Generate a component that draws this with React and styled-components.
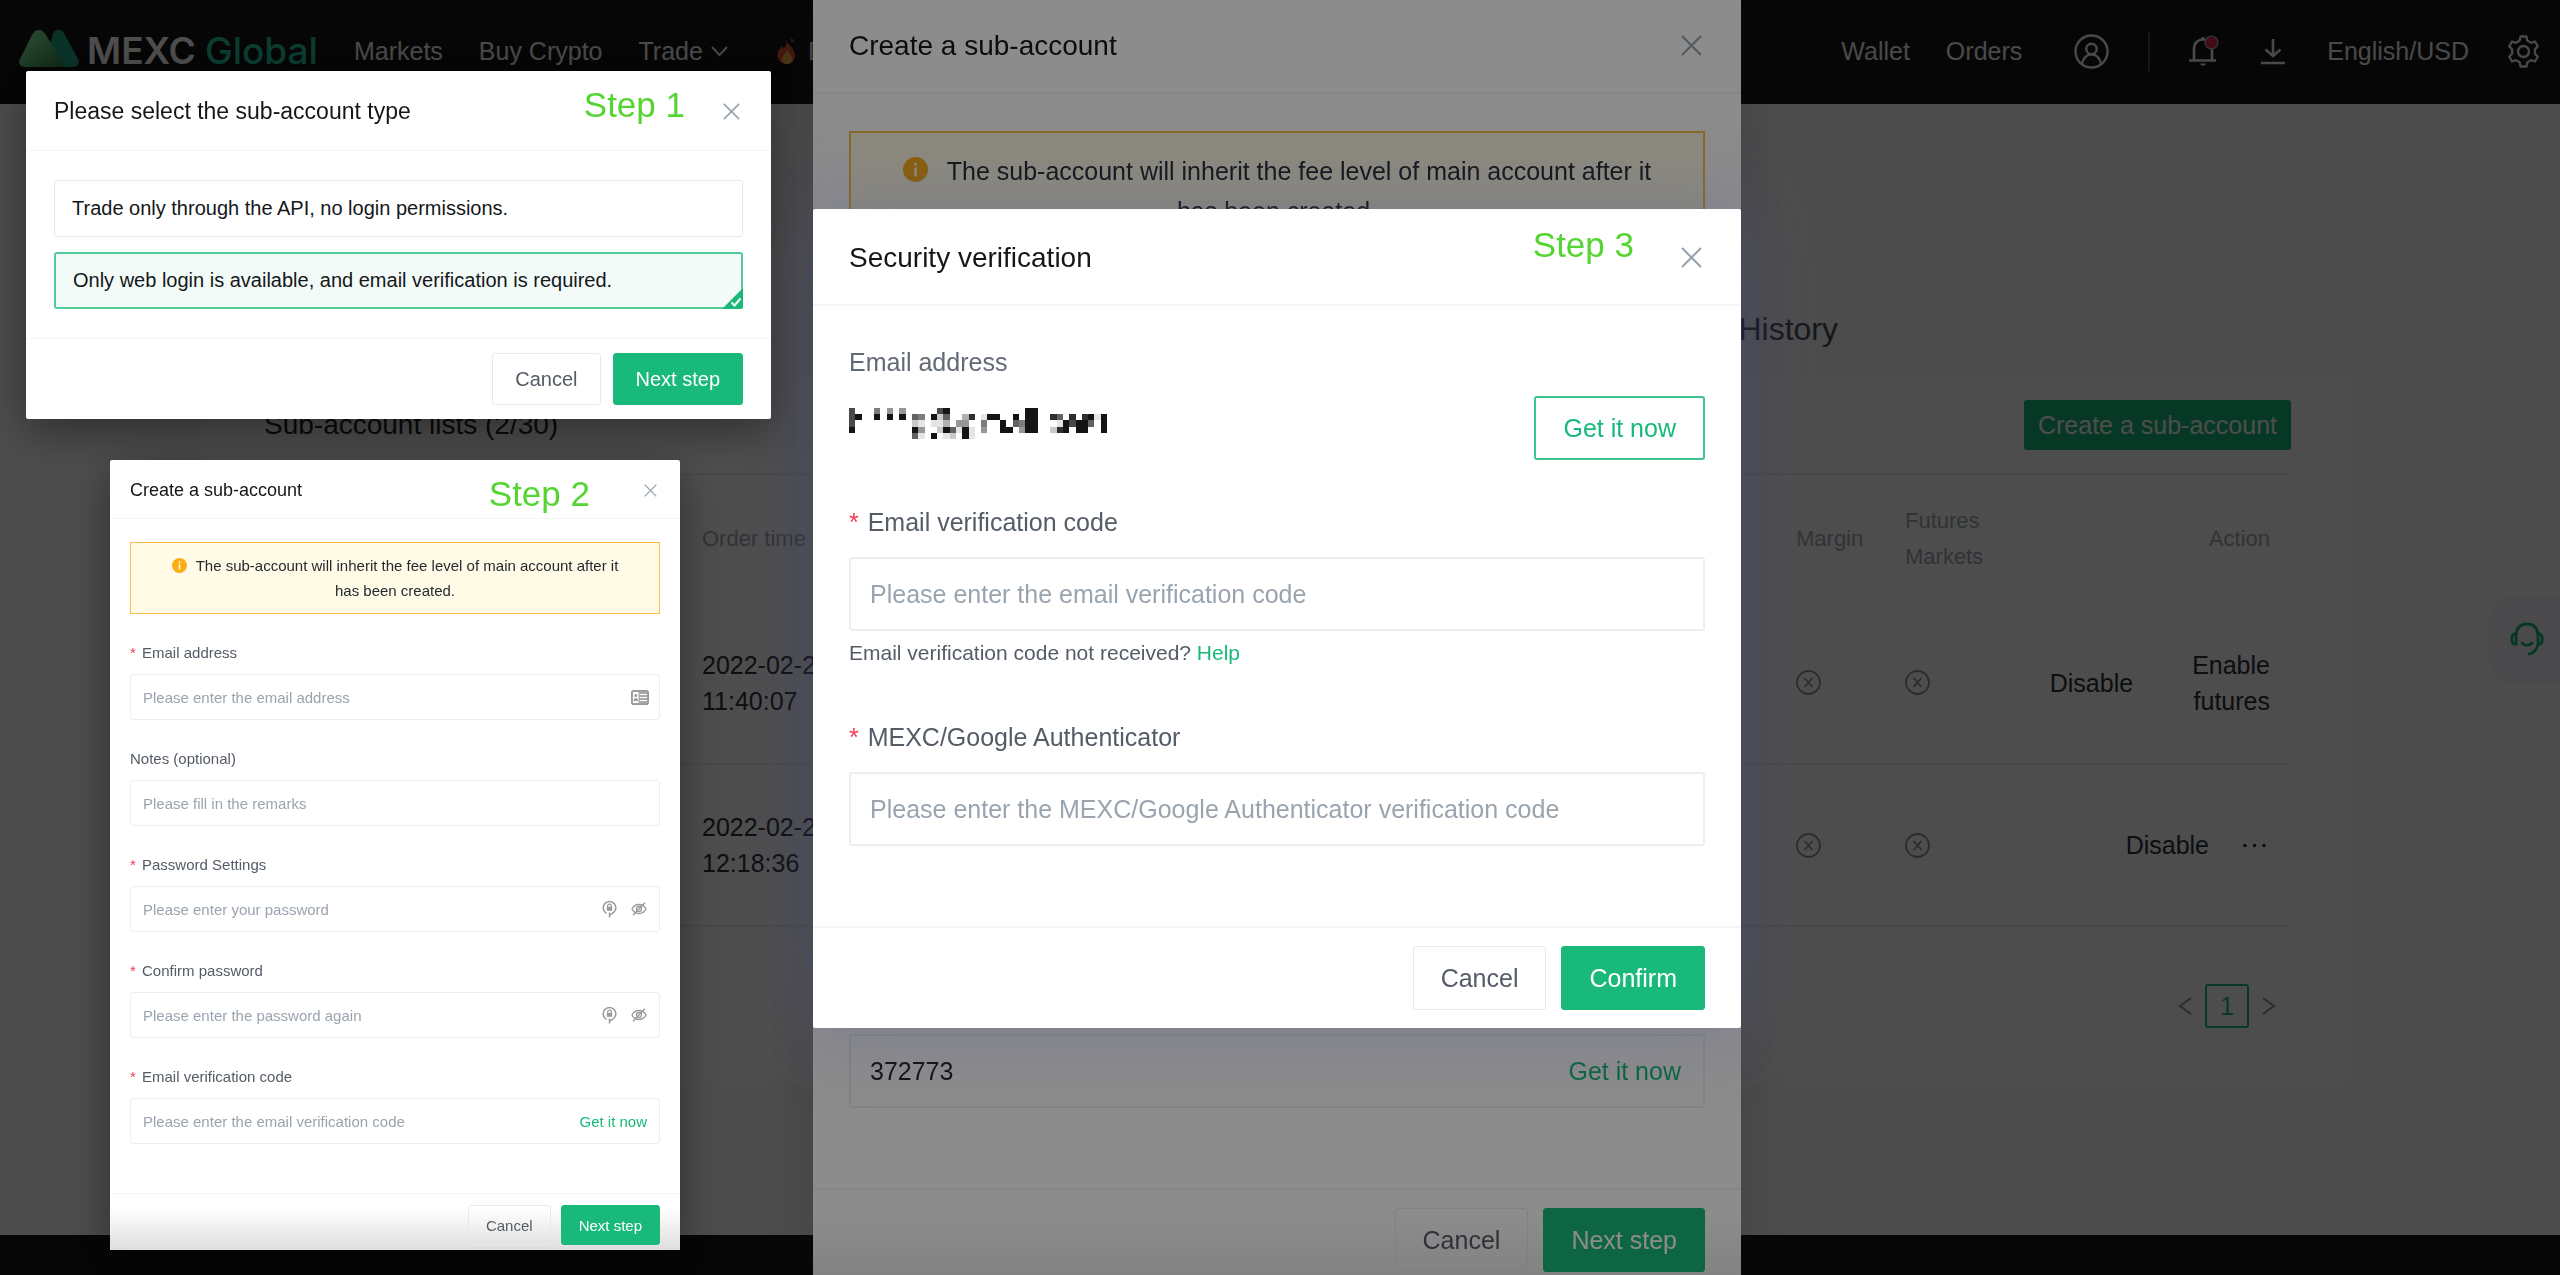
import React, {useId, useState} from 'react';
import styled, {createGlobalStyle, ThemeProvider} from 'styled-components';

const GlobalStyle = createGlobalStyle`
    *, *::before, *::after{
      box-sizing: border-box;
    }

    body{
      margin: 0;
      background: #FAFAFA;
      font-family: "Liberation Sans", Arial, Helvetica, sans-serif;
      color: #1E2329;
      overflow: hidden;
    }

    h1, h2, h3, p{
      margin: 0;
      font-weight: 400;
    }

    button, input{
      font-family: inherit;
    }

    svg{
      display: block;
      flex-shrink: 0;
    }
`

/* The dialogs share one set of parts, drawn at three scales */
const small = {
    pad: 20, title: 18, text: 15, header: 59, line: 25, labelGap: 9, input: 46, inputPad: 12,
    button: 40, buttonPad: 17, gap: 10, footTop: 11, footBottom: 5, close: 13, border: 1, info: 15, alertPad: 10
}

const medium = {
    pad: 28, title: 23, text: 20, header: 80, line: 28, labelGap: 12, input: 58, inputPad: 18,
    button: 52, buttonPad: 22, gap: 12, footTop: 14, footBottom: 14, close: 17, border: 1, info: 20, alertPad: 14
}

const large = {
    pad: 36, title: 28, text: 25, header: 97, line: 40, labelGap: 15, input: 74, inputPad: 19,
    button: 64, buttonPad: 27, gap: 15, footTop: 18, footBottom: 18, close: 21, border: 2, info: 25, alertPad: 18
}

const Page = styled.div`
    display: flex;
    flex-direction: column;
    min-height: 100vh;
`

const TopBar = styled.header`
    display: flex;
    align-items: center;
    height: 104px;
    padding: 0 21px 2px 19px;
    background: #141414;
    color: #FFFFFF;
    font-size: 25px;
`

const Brand = styled.a`
    display: flex;
    align-items: center;
    gap: 8px;
    color: #FFFFFF;
    font-family: Inter, sans-serif;
    font-size: 37px;
    font-weight: 600;
    line-height: 40px;
    text-decoration: none;

    svg{
      margin-bottom: 6px;
    }
`

const BrandAccent = styled.span`
    color: #24C8A0;
    font-weight: 500;
`

const NavLinks = styled.nav`
    display: flex;
    align-items: center;
    gap: 36px;
    margin-left: 36px;
`

const AccountLinks = styled(NavLinks)`
    margin: 0 13px 0 0;
`

const NavLink = styled.a`
    display: flex;
    align-items: center;
    gap: 8px;
    color: #F0F0F0;
    text-decoration: none;
`

const HotLink = styled(NavLink)`
    gap: 10px;
    margin-left: 12px;
`

const Tools = styled.div`
    display: flex;
    align-items: center;
    gap: 39px;
    margin-left: auto;
    color: #F0F0F0;
`

const ToolDivider = styled.span`
    width: 2px;
    height: 40px;
    background: #4A4A4A;
`

const IconButton = styled.button`
    display: flex;
    padding: 0;
    border: none;
    background: none;
    color: inherit;
    cursor: pointer;
`

const Main = styled.main`
    flex: 1;
    padding: 0 211px 0 206px;
`

const Tabs = styled.div`
    display: flex;
    justify-content: flex-end;
    height: 273px;
    padding: 204px 511px 0 0;
    font-size: 32px;
    line-height: 42px;
`

const Tab = styled.a`
    color: #474D57;
    text-decoration: none;
`

const Card = styled.section`
    padding: 0 58px 56px;
    background: #FFFFFF;
`

const CardHeader = styled.div`
    display: flex;
    align-items: center;
    justify-content: space-between;
    height: 98px;
    border-bottom: 2px solid #EDEFF2;
`

const CardTitle = styled.h2`
    font-size: 28px;
`

const CreateButton = styled.button`
    height: 50px;
    padding: 0 14px;
    border: none;
    border-radius: 3px;
    background: #18B97A;
    color: #FFFFFF;
    font-size: 25px;
    cursor: pointer;
`

const Table = styled.table`
    width: 100%;
    border-collapse: collapse;
    table-layout: fixed;
    font-size: 25px;
    line-height: 36px;

    th{
      height: 127px;
      padding: 0 0 0 21px;
      color: #A0A8B0;
      font-size: 22px;
      font-weight: 400;
      text-align: left;
    }

    td{
      height: 162px;
      padding: 0 0 0 21px;
      border-bottom: 2px solid #EDEFF2;
      color: #2B2F36;
    }

    th:last-child, td:last-child{
      padding-right: 21px;
      text-align: right;
    }
`

const Col = styled.col`
    width: ${props => props.$width};
`

const Actions = styled.div`
    display: flex;
    align-items: center;
    justify-content: flex-end;
    gap: ${props => props.$compact ? '34px' : '59px'};
`

const ActionButton = styled.button`
    padding: 0;
    border: none;
    background: none;
    color: #2B2F36;
    font-size: 25px;
    line-height: 36px;
    text-align: right;
    cursor: pointer;
`

const Pagination = styled.nav`
    display: flex;
    align-items: center;
    justify-content: flex-end;
    gap: 11px;
    margin-top: 57px;
    padding-right: 14px;
    color: #8A929C;
`

const PageNumber = styled.button`
    width: 44px;
    height: 44px;
    padding: 0;
    border: 2px solid #18B97A;
    border-radius: 3px;
    background: none;
    color: #18B97A;
    font-size: 25px;
    cursor: pointer;
`

const BottomBar = styled.footer`
    height: 40px;
    background: #141414;
`

const Support = styled.button`
    position: fixed;
    right: 0;
    top: 595px;
    display: flex;
    align-items: center;
    justify-content: center;
    width: 70px;
    height: 90px;
    padding: 0 0 2px 4px;
    border: none;
    border-radius: 20px 0 0 20px;
    background: #F7F7FC;
    color: #18B97A;
    cursor: pointer;
`

const Overlay = styled.div`
    position: fixed;
    inset: 0;
    display: flex;
    align-items: ${props => props.$stretch ? 'stretch' : 'flex-start'};
    justify-content: center;
    padding: ${props => props.$stretch ? '0 6px 0 0' : '209px 6px 0 0'};
    background: rgba(0, 0, 0, 0.45);
    overflow: hidden;
`

const Dialog = styled.section`
    display: flex;
    flex-direction: column;
    width: 928px;
    max-width: 100%;
    border-radius: 2px;
    background: #FFFFFF;
`

const PageDialog = styled(Dialog)`
    margin: -3px 0 -15px;
    box-shadow: 0 0 60px rgba(60, 65, 110, 0.2);
`

const FrontDialog = styled(Dialog)`
    position: relative;
    box-shadow: 0 0 80px rgba(85, 92, 150, 0.36);
`

const FloatingDialog = styled(Dialog)`
    position: fixed;
    top: ${props => props.$top}px;
    left: ${props => props.$left}px;
    width: ${props => props.$width}px;
    box-shadow: 0 12px 44px rgba(0, 0, 0, 0.4);
`

const DialogHeader = styled.div`
    display: flex;
    align-items: center;
    justify-content: space-between;
    height: ${props => props.theme.header}px;
    padding: 2px ${props => props.theme.pad + 3}px 0 ${props => props.theme.pad}px;
    border-bottom: ${props => props.theme.border}px solid #F4F5F7;
`

const DialogTitle = styled.h2`
    color: #14171A;
    font-size: ${props => props.theme.title}px;
`

const CloseButton = styled(IconButton)`
    color: #98A3AE;
`

const StepLabel = styled.span`
    position: absolute;
    top: ${props => props.$top}px;
    right: ${props => props.$right}px;
    color: #54D532;
    font-size: 35px;
    line-height: 40px;
`

const DialogBody = styled.div`
    display: flex;
    flex-direction: column;
    flex: 1;
    justify-content: space-between;
    gap: ${props => props.$gap}px;
    padding: ${props => props.$padTop}px ${props => props.theme.pad}px ${props => props.$padBottom}px;
`

const DialogFooter = styled.div`
    display: flex;
    justify-content: flex-end;
    gap: ${props => props.theme.gap}px;
    padding: ${props => props.theme.footTop}px ${props => props.theme.pad}px ${props => props.theme.footBottom}px;
    border-top: ${props => props.theme.border}px solid #F4F5F7;
    background: ${props => props.$fade ? `linear-gradient(#FFFFFF 25%, ${props.$fade})` : 'none'};
`

const Button = styled.button`
    height: ${props => props.theme.button}px;
    padding: 0 ${props => props.theme.buttonPad}px;
    border: 1px solid ${props => props.$primary ? '#18B97A' : '#E6EAEF'};
    border-radius: 3px;
    background: ${props => props.$primary ? '#18B97A' : 'transparent'};
    color: ${props => props.$primary ? '#FFFFFF' : '#545C66'};
    font-size: ${props => props.theme.text}px;
    cursor: pointer;
`

const OutlineButton = styled(Button)`
    border: 2px solid #3CC48F;
    color: #18B97A;
`

const Options = styled.div`
    display: flex;
    flex-direction: column;
    gap: 15px;
`

const Option = styled.label`
    position: relative;
    display: flex;
    align-items: center;
    height: 57px;
    padding: 0 17px;
    border: ${props => props.$active ? '2px solid #52CB99' : '1px solid #E3E8ED'};
    border-radius: 3px;
    background: ${props => props.$active ? '#F3FBF8' : '#FFFFFF'};
    color: #14171A;
    font-size: 20px;
    cursor: pointer;

    svg{
      position: absolute;
      right: -2px;
      bottom: -2px;
    }
`

const OptionInput = styled.input`
    position: absolute;
    opacity: 0;
`

const Alert = styled.p`
    padding: ${props => props.theme.alertPad}px;
    border: ${props => props.theme.border}px solid #FABD4C;
    background: #FFFBE6;
    color: #262A30;
    font-size: ${props => props.theme.text}px;
    line-height: ${props => props.theme.line}px;
    text-align: center;

    svg{
      display: inline-block;
      margin-right: ${props => props.theme.info - 6}px;
      vertical-align: -2px;
    }
`

const FieldBlock = styled.div`
    display: flex;
    flex-direction: column;
`

const Label = styled.label`
    margin-bottom: ${props => props.theme.labelGap}px;
    color: #545C66;
    font-size: ${props => props.theme.text}px;
    line-height: ${props => props.theme.line}px;
`

const Required = styled.span`
    margin-right: 2px;
    color: #EF3E56;
`

const InputBox = styled.div`
    display: flex;
    align-items: center;
    gap: 14px;
    height: ${props => props.theme.input}px;
    padding: 0 ${props => props.theme.inputPad}px;
    padding-right: ${props => props.$padRight || props.theme.inputPad}px;
    border: ${props => props.theme.border}px solid #EBEEF3;
    border-radius: 3px;
    color: #999999;
`

const Input = styled.input`
    flex: 1;
    min-width: 0;
    height: 100%;
    padding: 0;
    border: none;
    background: none;
    color: #1E2329;
    font-size: ${props => props.theme.text}px;

    &:focus{
      outline: none;
    }

    &::placeholder{
      color: #9AA4AE;
      opacity: 1;
    }
`

const TextButton = styled.button`
    padding: 0;
    border: none;
    background: none;
    color: #18B97A;
    font-size: ${props => props.theme.text}px;
    cursor: pointer;
`

const Hint = styled.p`
    margin: 7px 0;
    color: #545C66;
    font-size: 21px;
    line-height: 30px;
`

const HelpLink = styled.a`
    color: #18B97A;
    text-decoration: none;
`

const EmailCaption = styled.p`
    color: #626A75;
    font-size: 25px;
    line-height: 40px;
`

const EmailRow = styled.div`
    display: flex;
    align-items: center;
    justify-content: space-between;
    margin-top: 14px;

    svg{
      margin-bottom: 10px;
    }
`

/* Blocks of the masked address, row by row: [column, darkness from 1 to 9] */
const emailRows = [
    [[0, 7], [4, 5], [6, 4], [8, 4], [14, 7], [15, 9], [28, 9], [29, 9]],
    [[0, 7], [1, 9], [4, 9], [6, 9], [8, 9], [10, 6], [11, 5], [13, 9], [14, 2], [15, 6], [18, 3], [19, 8], [21, 1], [22, 9], [23, 9], [26, 9], [28, 9], [29, 9], [32, 8], [33, 6], [35, 8], [37, 8], [38, 9], [39, 1], [40, 9]],
    [[0, 7], [10, 2], [11, 1], [13, 1], [14, 1], [15, 3], [17, 4], [18, 4], [21, 5], [24, 9], [26, 6], [27, 5], [28, 9], [29, 9], [33, 1], [34, 9], [35, 7], [36, 9], [37, 9], [38, 6], [40, 9]],
    [[0, 9], [10, 9], [11, 4], [14, 2], [15, 9], [16, 6], [17, 1], [18, 9], [19, 1], [21, 4], [24, 9], [25, 9], [27, 4], [28, 9], [29, 9], [32, 2], [33, 8], [34, 9], [36, 9], [37, 9], [40, 9]],
    [[10, 6], [11, 1], [13, 9], [15, 1], [16, 2], [18, 9], [19, 1]],
]

function MaskedEmail(){
    return (
        <svg width="258" height="31" viewBox="0 0 41 5" preserveAspectRatio="none" shapeRendering="crispEdges" role="img" aria-label="Masked email">
            {emailRows.map((row, y) => row.map(([x, level]) => (
                <rect key={x + '_' + y} x={x} y={y} width="1" height="1" fill="#141414" opacity={level / 9}/>
            )))}
        </svg>
    )
}

function BrandMark(){
    return (
        <svg width="60" height="37" viewBox="0 0 60 37">
            <defs>
                <linearGradient id="brandLeft" x1="0" y1="0" x2="1" y2="1">
                    <stop offset="0.3" stopColor="#7DDC93"/>
                    <stop offset="1" stopColor="#2F8A48"/>
                </linearGradient>
            </defs>
            <path d="M39 0c3 0 5 1 7 5l13 24c2 4 0 8-5 8H25L34 4c1-3 3-4 5-4Z" fill="#22A886"/>
            <path d="M20 0c3 0 5 2 7 5l16 26c2 3 2 6 0 6H6c-5 0-7-4-5-8L13 5c2-4 4-5 7-5Z" fill="url(#brandLeft)"/>
        </svg>
    )
}

function FlameIcon(){
    return (
        <svg width="22" height="28" viewBox="0 0 22 28">
            <path d="M10 3c1 4 6 6 8 11 3 7-1 13-7 13S0 22 2 15c1-3 3-4 4-6 1 1 1 2 1 3 3-2 4-5 3-9Z" fill="#E8502E"/>
            <path d="M15 1l3 2-1 3-2-2Z" fill="#C23A30"/>
            <path d="M11 13c2 3 5 5 5 9 0 3-2 5-5 5s-5-2-5-5c0-4 4-5 5-9Z" fill="#E8B64A"/>
        </svg>
    )
}

function UserIcon(){
    return (
        <svg width="35" height="35" viewBox="0 0 35 35" fill="none" stroke="currentColor" strokeWidth="2.4">
            <circle cx="17.5" cy="17.5" r="16"/>
            <circle cx="17.5" cy="15" r="5.2"/>
            <path d="M8 30c1-6 5-9.6 9.500-9.600S26 24 27 30"/>
        </svg>
    )
}

function BellIcon(){
    return (
        <svg width="30" height="32" viewBox="0 0 30 32" fill="none" stroke="currentColor" strokeWidth="2.6">
            <path d="M5 25V14C5 8 9 4.500 14 4.500S23 8 23 14v11"/>
            <path d="M0 25.500h27M14 2v3"/>
            <path d="M11 28.500h6c-1 3-5 3-6 0Z" fill="currentColor" stroke="none"/>
            <circle cx="22.500" cy="7.500" r="6.500" fill="#E0294A" stroke="#B8B8B8" strokeWidth="1.200"/>
        </svg>
    )
}

function DownloadIcon(){
    return (
        <svg width="30" height="28" viewBox="0 0 30 28" fill="none" stroke="currentColor" strokeWidth="2.6">
            <path d="M15 2v17M7.500 12.500 15 19l7.500-6.500M3 26h24"/>
        </svg>
    )
}

function GearIcon(){
    return (
        <svg width="31" height="33" viewBox="0 0 31 33" fill="none" stroke="currentColor" strokeWidth="2.300" strokeLinejoin="round">
            <path d="M12.600 1.500h5.800l1 4.300 3.600 2 4-1.300 2.800 4.800-2.900 3.100v4.200l2.900 3.100-2.800 4.800-4-1.300-3.600 2-1 4.300h-5.800l-1-4.300-3.600-2-4 1.300-2.800-4.800 2.900-3.100v-4.200l-2.900-3.100L4 6.500l4 1.300 3.600-2Z"/>
            <circle cx="15.500" cy="16.500" r="5.500"/>
        </svg>
    )
}

function Chevron({direction = 'down'}){
    const paths = {
        down: 'M1 5 8.500 13 16 5',
        left: 'M14 1 3 9l11 8',
        right: 'M3 1l11 8-11 8',
    }
    return (
        <svg width="17" height="18" viewBox="0 0 17 18" fill="none" stroke="currentColor" strokeWidth="2">
            <path d={paths[direction]}/>
        </svg>
    )
}

function CrossedCircle(){
    return (
        <svg width="25" height="25" viewBox="0 0 25 25" fill="none" stroke="#8A929C" strokeWidth="1.800">
            <circle cx="12.500" cy="12.500" r="11.500"/>
            <path d="M8.500 8l8 9M16.500 8l-8 9"/>
        </svg>
    )
}

function DotsIcon(){
    return (
        <svg width="27" height="25" viewBox="0 0 27 25" fill="currentColor">
            <circle cx="2" cy="12.500" r="1.800"/>
            <circle cx="11.500" cy="12.500" r="1.800"/>
            <circle cx="21" cy="12.500" r="1.800"/>
        </svg>
    )
}

function HeadsetIcon(){
    return (
        <svg width="34" height="34" viewBox="0 0 34 34" fill="none" stroke="currentColor" strokeWidth="2.800" strokeLinecap="round">
            <path d="M6 12C7 5 11 2 17 2s10 3 11 10"/>
            <path d="M6 12H4c-3 1-3 9 0 10h2ZM28 12h2c3 1 3 9 0 10h-2ZM28 22c-1 6-5 9-9 10M12 21c3 3 7 3 10 0"/>
        </svg>
    )
}

function CloseIcon({size}){
    return (
        <svg width={size} height={size} viewBox="0 0 20 20" fill="none" stroke="currentColor" strokeWidth="2">
            <path d="M1 1l18 18M19 1 1 19"/>
        </svg>
    )
}

function InfoIcon({size}){
    return (
        <svg width={size} height={size} viewBox="0 0 24 24">
            <circle cx="12" cy="12" r="12" fill="#FAAD14"/>
            <rect x="10.800" y="5.500" width="2.400" height="2.800" fill="#FFFBE6"/>
            <rect x="10.800" y="10" width="2.400" height="8.500" fill="#FFFBE6"/>
        </svg>
    )
}

function SelectedCorner(){
    return (
        <svg width="21" height="21" viewBox="0 0 21 21">
            <path d="M21 0v18a3 3 0 0 1-3 3H0Z" fill="#18B97A"/>
            <path d="M9.500 14.500l3 3 6-7" fill="none" stroke="#FFFFFF" strokeWidth="2"/>
        </svg>
    )
}

function ContactIcon(){
    return (
        <svg width="18" height="15" viewBox="0 0 18 15">
            <rect x="0.800" y="0.800" width="16.400" height="13.400" rx="2" fill="#ABABAB" stroke="#999999" strokeWidth="1.600"/>
            <rect x="2" y="2" width="5.500" height="11" fill="#FFFFFF"/>
            <circle cx="4.800" cy="5.500" r="1.500" fill="#999999"/>
            <path d="M2.500 11c0-4 4.600-4 4.600 0Z" fill="#999999"/>
            <path d="M9 4.500h7M9 7.500h7M9 10.500h7" stroke="#FFFFFF" strokeWidth="1.200"/>
        </svg>
    )
}

function KeyLockIcon(){
    return (
        <svg width="15" height="18" viewBox="0 0 15 18" fill="none" stroke="currentColor" strokeWidth="1.500">
            <path d="M4.500 13.300A6.300 6.300 0 1 1 10.500 13.300L7.500 15"/>
            <path d="M7.500 12.500v5" />
            <path d="M5.700 7V5.700c0-2.200 3.600-2.200 3.600 0V7" strokeWidth="1.200"/>
            <rect x="4.800" y="6.800" width="5.400" height="4" fill="currentColor" stroke="none"/>
        </svg>
    )
}

function EyeOffIcon(){
    return (
        <svg width="16" height="14" viewBox="0 0 16 14" fill="none" stroke="currentColor" strokeWidth="1.300">
            <path d="M1 7c3-6 11-6 14 0-3 6-11 6-14 0Z"/>
            <circle cx="8" cy="7" r="2.500"/>
            <path d="M14 0.800 2 13.200"/>
        </svg>
    )
}

function Field({label, required, placeholder, type = 'text', padRight, hint, children}){
    const id = useId();
    const [value, setValue] = useState('');

    return (
        <FieldBlock>
            <Label htmlFor={id}>{required && <Required>* </Required>}{label}</Label>
            <InputBox $padRight={padRight}>
                <Input id={id} type={type} placeholder={placeholder} value={value} onChange={(e) => setValue(e.target.value)}/>
                {children}
            </InputBox>
            {hint}
        </FieldBlock>
    )
}

function FeeNotice({size}){
    return (
        <Alert>
            <InfoIcon size={size}/>
            The sub-account will inherit the fee level of main account after it<br/>has been created.
        </Alert>
    )
}

function PasswordIcons(){
    return (
        <>
            <IconButton type="button" aria-label="Suggest password"><KeyLockIcon/></IconButton>
            <IconButton type="button" aria-label="Show password"><EyeOffIcon/></IconButton>
        </>
    )
}

function AccountsPage(){
    return (
        <Page>
            <TopBar>
                <Brand href="#">
                    <BrandMark/>
                    <span>MEXC <BrandAccent>Global</BrandAccent></span>
                </Brand>
                <NavLinks>
                    <NavLink href="#">Markets</NavLink>
                    <NavLink href="#">Buy Crypto</NavLink>
                    <NavLink href="#">Trade <Chevron/></NavLink>
                    <HotLink href="#"><FlameIcon/>D</HotLink>
                </NavLinks>
                <Tools>
                    <AccountLinks>
                        <NavLink href="#">Wallet</NavLink>
                        <NavLink href="#">Orders</NavLink>
                    </AccountLinks>
                    <IconButton aria-label="Account"><UserIcon/></IconButton>
                    <ToolDivider/>
                    <IconButton aria-label="Notifications"><BellIcon/></IconButton>
                    <IconButton aria-label="Download"><DownloadIcon/></IconButton>
                    <NavLink href="#">English/USD</NavLink>
                    <IconButton aria-label="Settings"><GearIcon/></IconButton>
                </Tools>
            </TopBar>
            <Main>
                <Tabs><Tab href="#">History</Tab></Tabs>
                <Card>
                    <CardHeader>
                        <CardTitle>Sub-account lists (2/30)</CardTitle>
                        <CreateButton>Create a sub-account</CreateButton>
                    </CardHeader>
                    <Table>
                        <colgroup>
                            <Col $width="417px"/>
                            <Col $width="220px"/>
                            <Col $width="auto"/>
                            <Col $width="109px"/>
                            <Col $width="109px"/>
                            <Col $width="298px"/>
                        </colgroup>
                        <thead>
                            <tr>
                                <th/>
                                <th>Order time</th>
                                <th/>
                                <th>Margin</th>
                                <th>Futures<br/>Markets</th>
                                <th>Action</th>
                            </tr>
                        </thead>
                        <tbody>
                            <tr>
                                <td/>
                                <td>2022-02-25<br/>11:40:07</td>
                                <td/>
                                <td><CrossedCircle/></td>
                                <td><CrossedCircle/></td>
                                <td>
                                    <Actions>
                                        <ActionButton>Disable</ActionButton>
                                        <ActionButton>Enable<br/>futures</ActionButton>
                                    </Actions>
                                </td>
                            </tr>
                            <tr>
                                <td/>
                                <td>2022-02-24<br/>12:18:36</td>
                                <td/>
                                <td><CrossedCircle/></td>
                                <td><CrossedCircle/></td>
                                <td>
                                    <Actions $compact>
                                        <ActionButton>Disable</ActionButton>
                                        <ActionButton aria-label="More"><DotsIcon/></ActionButton>
                                    </Actions>
                                </td>
                            </tr>
                        </tbody>
                    </Table>
                    <Pagination>
                        <IconButton aria-label="Previous page"><Chevron direction="left"/></IconButton>
                        <PageNumber>1</PageNumber>
                        <IconButton aria-label="Next page"><Chevron direction="right"/></IconButton>
                    </Pagination>
                </Card>
            </Main>
            <BottomBar/>
            <Support aria-label="Support"><HeadsetIcon/></Support>
        </Page>
    )
}

function DialogTop({title, size}){
    return (
        <DialogHeader>
            <DialogTitle>{title}</DialogTitle>
            <CloseButton aria-label="Close"><CloseIcon size={size}/></CloseButton>
        </DialogHeader>
    )
}

function DialogButtons({confirm, fade}){
    return (
        <DialogFooter $fade={fade}>
            <Button>Cancel</Button>
            <Button $primary>{confirm}</Button>
        </DialogFooter>
    )
}

function CreateInProgress(){
    const [code, setCode] = useState('372773');

    return (
        <ThemeProvider theme={large}>
            <PageDialog>
                <DialogTop title="Create a sub-account" size={large.close}/>
                <DialogBody $padTop={37} $padBottom={80} $gap={40}>
                    <FeeNotice size={large.info}/>
                    <InputBox $padRight={22}>
                        <Input aria-label="Email verification code" value={code} onChange={(e) => setCode(e.target.value)}/>
                        <TextButton>Get it now</TextButton>
                    </InputBox>
                </DialogBody>
                <DialogButtons confirm="Next step" fade="#E9E9E9"/>
            </PageDialog>
        </ThemeProvider>
    )
}

function SecurityVerification(){
    return (
        <ThemeProvider theme={large}>
            <FrontDialog>
                <DialogTop title="Security verification" size={large.close}/>
                <StepLabel $top={16} $right={107}>Step 3</StepLabel>
                <DialogBody $padTop={36} $padBottom={80} $gap={42}>
                    <div>
                        <EmailCaption>Email address</EmailCaption>
                        <EmailRow>
                            <MaskedEmail/>
                            <OutlineButton>Get it now</OutlineButton>
                        </EmailRow>
                    </div>
                    <Field label="Email verification code" required placeholder="Please enter the email verification code"
                           hint={<Hint>Email verification code not received? <HelpLink href="#">Help</HelpLink></Hint>}/>
                    <Field label="MEXC/Google Authenticator" required placeholder="Please enter the MEXC/Google Authenticator verification code"/>
                </DialogBody>
                <DialogButtons confirm="Confirm"/>
            </FrontDialog>
        </ThemeProvider>
    )
}

const accountTypes = [
    'Trade only through the API, no login permissions.',
    'Only web login is available, and email verification is required.',
]

function AccountType(){
    const [selected, setSelected] = useState(1);

    return (
        <ThemeProvider theme={medium}>
            <FloatingDialog $top={71} $left={26} $width={745}>
                <DialogTop title="Please select the sub-account type" size={medium.close}/>
                <StepLabel $top={14} $right={86}>Step 1</StepLabel>
                <DialogBody $padTop={29} $padBottom={29} $gap={0}>
                    <Options>
                        {accountTypes.map((item, index) => (
                            <Option key={item} $active={selected === index}>
                                <OptionInput type="radio" name="accountType" checked={selected === index} onChange={() => setSelected(index)}/>
                                {item}
                                {selected === index && <SelectedCorner/>}
                            </Option>
                        ))}
                    </Options>
                </DialogBody>
                <DialogButtons confirm="Next step"/>
            </FloatingDialog>
        </ThemeProvider>
    )
}

function CreateAccount(){
    return (
        <ThemeProvider theme={small}>
            <FloatingDialog $top={460} $left={110} $width={570}>
                <DialogTop title="Create a sub-account" size={small.close}/>
                <StepLabel $top={14} $right={90}>Step 2</StepLabel>
                <DialogBody $padTop={23} $padBottom={49} $gap={26}>
                    <FeeNotice size={small.info}/>
                    <Field label="Email address" required placeholder="Please enter the email address" padRight={10}>
                        <ContactIcon/>
                    </Field>
                    <Field label="Notes (optional)" placeholder="Please fill in the remarks"/>
                    <Field label="Password Settings" required type="password" placeholder="Please enter your password">
                        <PasswordIcons/>
                    </Field>
                    <Field label="Confirm password" required type="password" placeholder="Please enter the password again">
                        <PasswordIcons/>
                    </Field>
                    <Field label="Email verification code" required placeholder="Please enter the email verification code">
                        <TextButton>Get it now</TextButton>
                    </Field>
                </DialogBody>
                <DialogButtons confirm="Next step" fade="#DEDEDE"/>
            </FloatingDialog>
        </ThemeProvider>
    )
}

const App = () => {
    return (
        <>
            <GlobalStyle/>
            <AccountsPage/>
            <Overlay $stretch><CreateInProgress/></Overlay>
            <Overlay><SecurityVerification/></Overlay>
            <AccountType/>
            <CreateAccount/>
        </>
    );
};

export default App;
